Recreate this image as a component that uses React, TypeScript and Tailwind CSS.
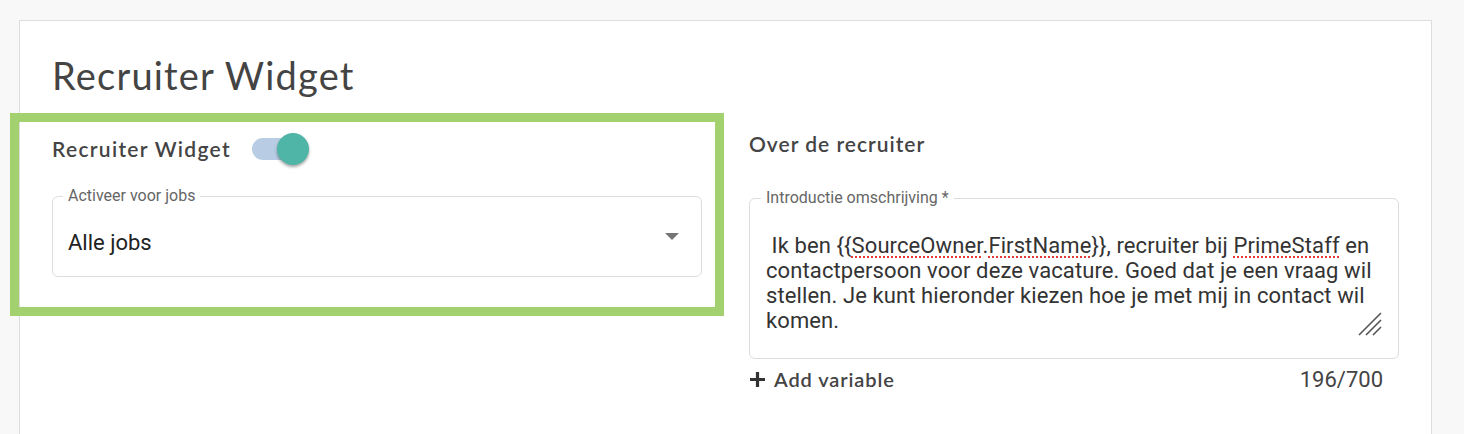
import React from "react";

const raleway = { fontFamily: "Lato, 'Open Sans', sans-serif" };

function Toggle() {
  return (
    <div className="relative ml-[21px] h-[34px] w-[60px]">
      <div className="absolute left-0 top-[6px] h-[22px] w-[48px] rounded-full bg-[#b8cde4]" />
      <div className="absolute left-[25px] top-[1px] h-[32px] w-[32px] rounded-full bg-[#4fb5a7] shadow-[0_2px_3px_rgba(0,0,0,0.35)]" />
    </div>
  );
}

function Misspelled({ children }: { children: React.ReactNode }) {
  return (
    <span className="underline decoration-dotted decoration-[#e53935] decoration-2 underline-offset-[4px]">
      {children}
    </span>
  );
}

export default function App() {
  return (
    <div className="min-h-[434px] w-[1464px] overflow-hidden bg-[#f8f8f8] pt-[20px]">
      <div className="ml-[19px] h-[430px] w-[1413px] border border-[#dddddd] bg-white">
        <div
          className="pl-[32px] pt-[32px] text-[38px] leading-[44px] tracking-[1.2px] text-[#444444]"
          style={raleway}
        >
          Recruiter Widget
        </div>
        <div className="mt-[16px] flex">
          <div className="-ml-[10px] flex h-[203px] w-[714px] flex-col border-[9px] border-[#a3d16f] pl-[33px] pr-[12px] pt-[10px]">
            <div className="flex items-center">
              <span
                className="text-[21px] font-semibold tracking-[1.3px] text-[#444444]"
                style={raleway}
              >
                Recruiter Widget
              </span>
              <Toggle />
            </div>
            <div className="relative mt-[30px] flex h-[81px] w-[650px] items-center justify-between rounded-[6px] border border-[#dddddd] pl-[15px] pr-[22px] font-['Roboto',sans-serif]">
              <span className="absolute -top-[11px] left-[10px] bg-white px-[5px] text-[16px] leading-[20px] text-[#666666]">
                Activeer voor jobs
              </span>
              <span className="mt-[12px] text-[22px] leading-[26px] text-[#222222]">
                Alle jobs
              </span>
              <svg width="14" height="8" viewBox="0 0 14 8">
                <path d="M0 0 L14 0 L7 7 Z" fill="#757575" />
              </svg>
            </div>
          </div>
          <div className="ml-[25px] flex w-[650px] flex-col">
            <div
              className="mt-[15px] text-[21px] font-semibold tracking-[1px] text-[#444444]"
              style={raleway}
            >
              Over de recruiter
            </div>
            <div className="relative mt-[38px] h-[161px] w-[650px] rounded-[6px] border border-[#dddddd] pl-[16px] pr-[16px] pt-[34px] font-['Roboto',sans-serif]">
              <span className="absolute -top-[11px] left-[11px] bg-white px-[5px] text-[16px] leading-[20px] text-[#666666]">
                Introductie omschrijving *
              </span>
              <p className="text-[22px] leading-[25px] tracking-[0.1px] text-[#333333]">
                {"\u00a0"}Ik ben {"{{"}
                <Misspelled>SourceOwner</Misspelled>.<Misspelled>FirstName</Misspelled>
                {"}}"}, recruiter bij <Misspelled>PrimeStaff</Misspelled> en
                contactpersoon voor deze vacature. Goed dat je een vraag wil
                stellen. Je kunt hieronder kiezen hoe je met mij in contact wil
                komen.
              </p>
              <svg
                className="absolute bottom-[21px] right-[15px]"
                width="26"
                height="26"
                viewBox="0 0 26 26"
              >
                <path
                  d="M24 2 L2 24 M24 9 L9 24 M24 16 L16 24"
                  stroke="#555555"
                  strokeWidth="1.6"
                />
              </svg>
            </div>
            <div className="mt-[4px] flex items-center justify-between pr-[16px]">
              <div
                className="flex items-center text-[20px] font-semibold tracking-[0.9px] text-[#444444]"
                style={raleway}
              >
                <svg width="17" height="17" viewBox="0 0 17 17" className="mr-[8px]">
                  <path d="M8.5 1 V16 M1 8.5 H16" stroke="#333333" strokeWidth="3.2" />
                </svg>
                Add variable
              </div>
              <div className="font-['Roboto',sans-serif] text-[22px] text-[#444444]">
                196/700
              </div>
            </div>
          </div>
        </div>
      </div>
    </div>
  );
}
